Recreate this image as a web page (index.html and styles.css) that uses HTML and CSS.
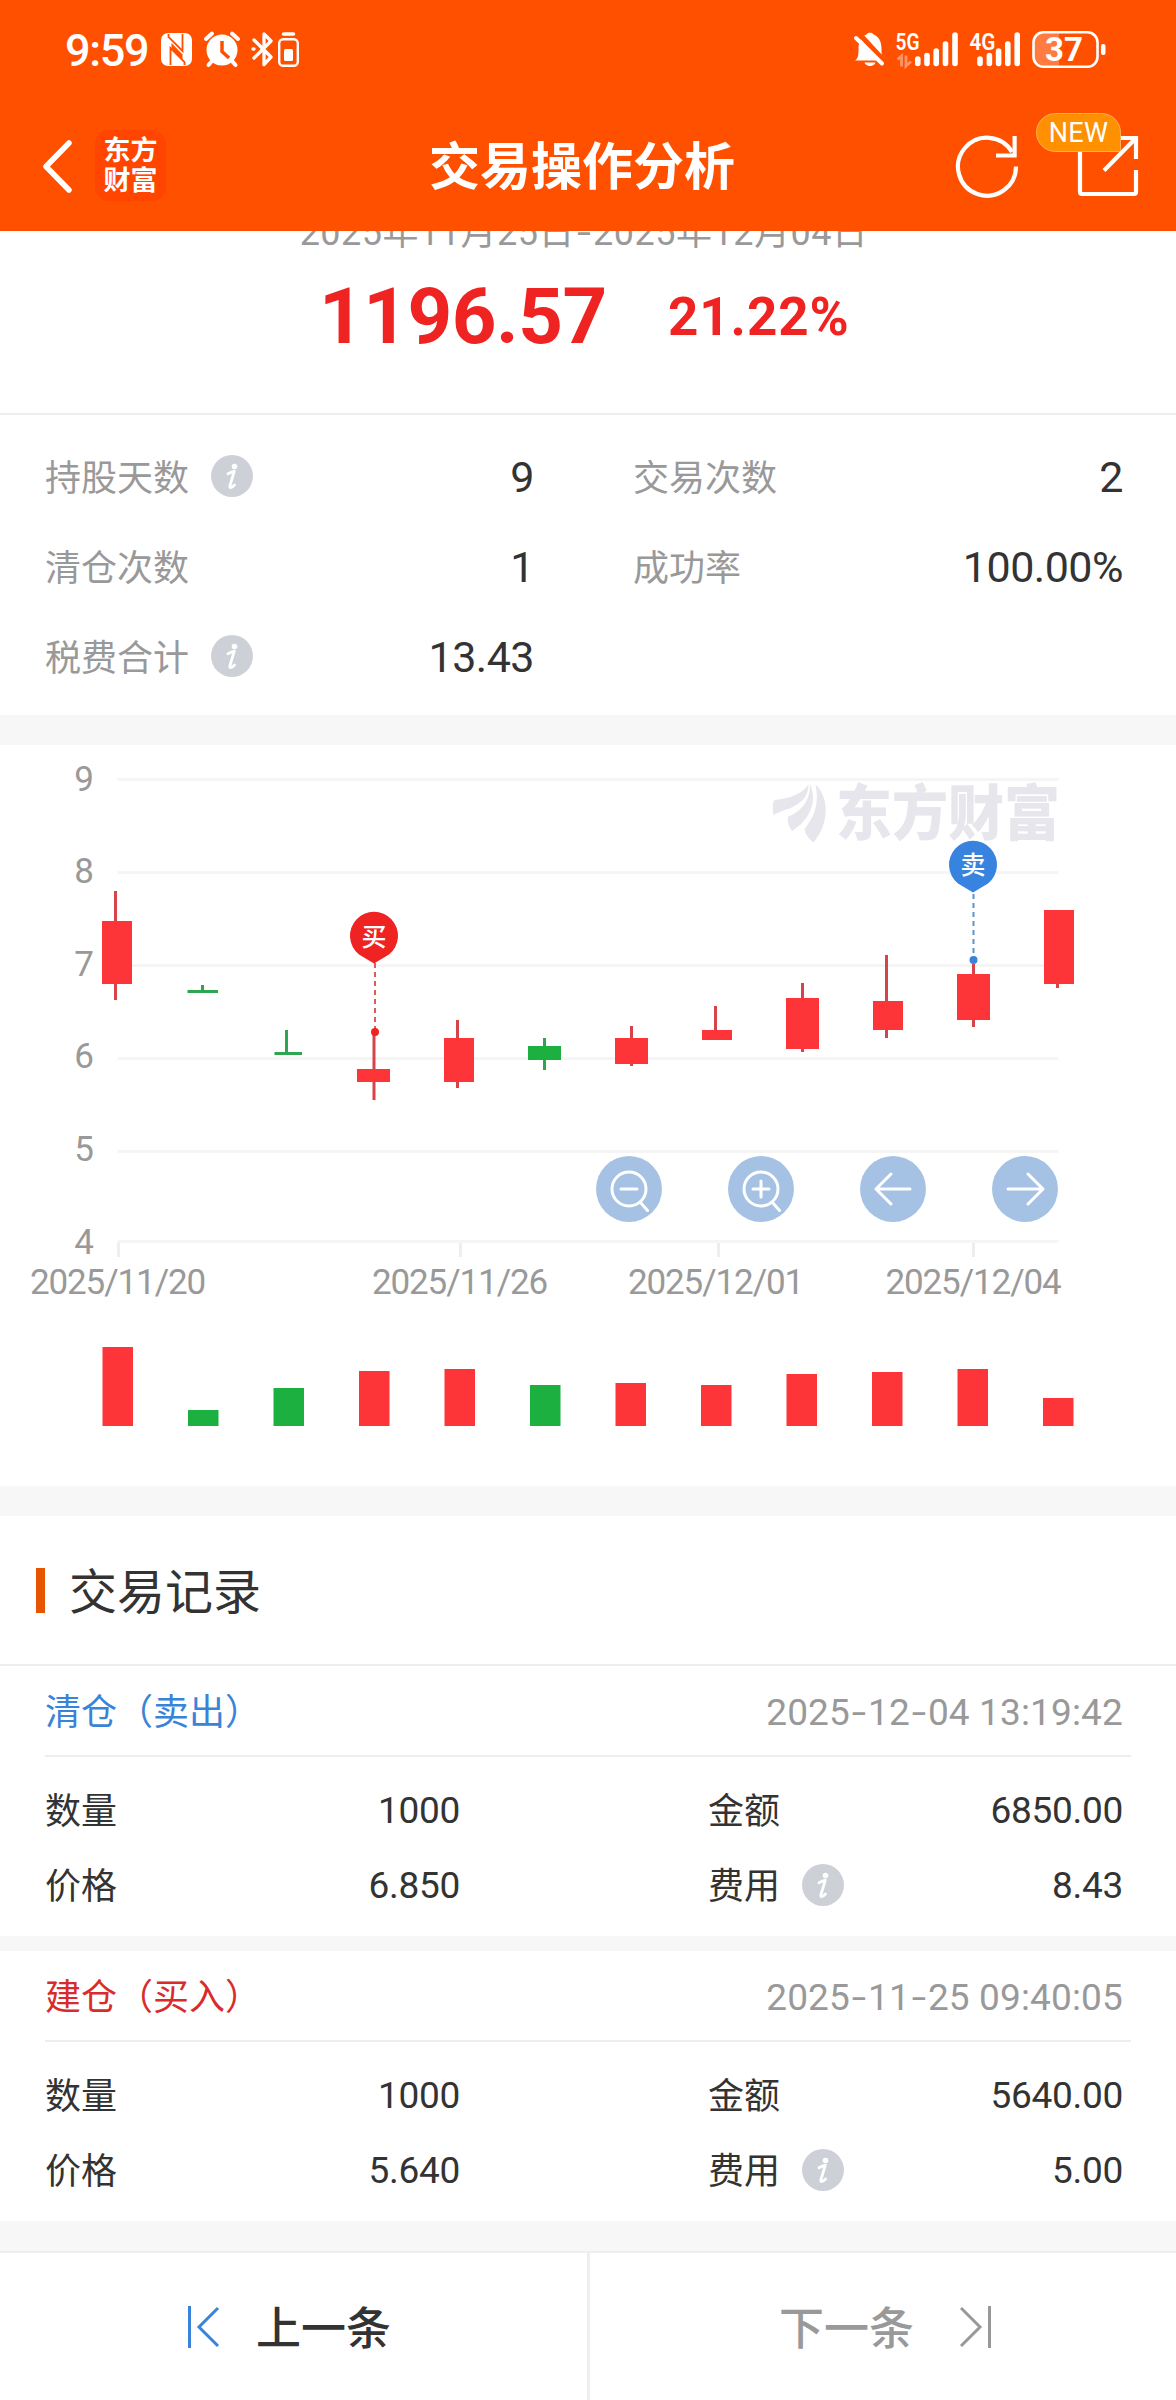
FILE: index.html
```html
<!DOCTYPE html>
<html lang="zh-CN">
<head>
  <meta charset="UTF-8">
  <meta name="viewport" content="width=device-width, initial-scale=1.0">
  <title>交易操作分析</title>
  <link rel="stylesheet" href="styles.css">
</head>
<body>
  <!-- 公用图标 -->
  <svg class="defs">
    <symbol id="info" viewBox="0 0 42 42">
      <circle cx="21" cy="21" r="21" fill="#cdd0d6"/>
      <circle cx="23.5" cy="11.5" r="2.8" fill="#fff"/>
      <path d="M17 18.800c2-1 4-2 6.300-2.600L19 30.500c-.8 2.800 1 3.200 4.500-.5" fill="none" stroke="#fff" stroke-width="2.800" stroke-linecap="round" stroke-linejoin="round"/>
    </symbol>
  </svg>

  <!-- 头部 -->
  <header class="header">
    <div class="status">
      <span class="time">9:59</span>
      <svg class="status-left" width="140" height="40" viewBox="160 30 140 40">
        <!-- NFC -->
        <rect x="161" y="33" width="31" height="33" rx="7" fill="#fff"/>
        <path d="M168.500 34v3l14 14V34M184.500 65v-3l-14-14v17" fill="none" stroke="#ff5000" stroke-width="1.800"/>
        <path d="M171.500 43l11 11.500v6L171.500 49z" fill="#ff5000"/>
        <!-- 闹钟 -->
        <circle cx="222" cy="50" r="15.500" fill="#fff"/>
        <path d="M206 39l6-5.500M238 39l-6-5.500M212 61l-3.500 4M232 61l3.500 4" stroke="#fff" stroke-width="4" stroke-linecap="round"/>
        <path d="M222 41v10.500l7 6.500" fill="none" stroke="#ff5000" stroke-width="3.500"/>
        <!-- 蓝牙 -->
        <path d="M254 40l17 17-7 7.500V34l7 7-17 17M253 49h1" fill="none" stroke="#fff" stroke-width="3.300" stroke-linecap="round" stroke-linejoin="round"/>
        <path d="M283.500 34h10" stroke="#fff" stroke-width="3.500" stroke-linecap="round"/>
        <rect x="279.200" y="39.200" width="18.600" height="26.600" rx="4" fill="none" stroke="#fff" stroke-width="2.400"/>
        <rect x="284" y="49" width="9" height="12" rx="1.500" fill="#fff"/>
      </svg>
      <svg class="status-right" width="256" height="40" viewBox="852 30 256 40">
        <!-- 静音 -->
        <path d="M855 60.500c3-2 3.500-5 3.500-11 0-9 3-13 8-15 1-2.500 6-2.500 7 0 5 2 8 6 8 15 0 6 .5 9 3.500 11z" fill="#fff"/>
        <path d="M864.500 62.500h11c-1 4.500-10 4.500-11 0z" fill="#fff"/>
        <path d="M858 32.500L887 64" stroke="#ff5000" stroke-width="5"/>
        <path d="M856 38l26 25.500" stroke="#fff" stroke-width="4" stroke-linecap="round"/>
        <text class="net" x="895.500" y="50" textLength="24" lengthAdjust="spacingAndGlyphs">5G</text>
        <path d="M897.500 59.500l4-3.500v10.500M906 55.500V66l5-4.500" fill="none" stroke="#ff9468" stroke-width="2.800"/>
        <path d="M917.800 59v4.500M927 55.500v8M936.200 51v12.500M945.500 44v19.500M955 35v28.500" stroke="#fff" stroke-width="5.600" stroke-linecap="round"/>
        <text class="net" x="969.500" y="50" textLength="26" lengthAdjust="spacingAndGlyphs">4G</text>
        <path d="M980 59v4.500M989.400 55.500v8M998.600 51v12.500M1007.800 44v19.500M1017.200 35v28.500" stroke="#fff" stroke-width="5.600" stroke-linecap="round"/>
        <!-- 电量 -->
        <path d="M1059 33h-14a11 11 0 0 0-11 11v11a11 11 0 0 0 11 11h14z" fill="#ff7b40"/>
        <rect x="1033.500" y="32.300" width="64" height="34.500" rx="10" fill="none" stroke="#fff" stroke-width="2.600"/>
        <rect x="1101" y="44" width="4.500" height="11" rx="2" fill="#fff"/>
        <text class="power" x="1064" y="61" text-anchor="middle">37</text>
      </svg>
    </div>
    <div class="nav">
      <div class="nav-left">
        <svg width="32" height="54" viewBox="0 0 32 54">
          <path d="M28 4L5 27.500 28 51" fill="none" stroke="#fff" stroke-width="5.500" stroke-linecap="round" stroke-linejoin="round"/>
        </svg>
        <div class="logo"><span>东方</span><span>财富</span></div>
      </div>
      <h1 class="title">交易操作分析</h1>
      <div class="nav-right">
        <svg width="64" height="66" viewBox="955 132 64 66">
          <path d="M1016 165.500A29 29 0 1 1 1012 151" fill="none" stroke="#fff" stroke-width="4.200"/>
          <path d="M1014.600 135v19.500H996" fill="none" stroke="#fff" stroke-width="4.200"/>
        </svg>
        <div class="share">
          <svg width="62" height="64" viewBox="1077 133 62 64">
            <path d="M1080 148v43q0 2 2 2h52q2 0 2-2v-22M1116 137h20v21M1104 169.500l31-31.500" fill="none" stroke="#fff" stroke-width="4.200"/>
          </svg>
          <span class="badge">NEW</span>
        </div>
      </div>
    </div>
  </header>

  <!-- 收益概览 -->
  <section class="summary">
    <p class="period">2025年11月25日<i>-</i>2025年12月04日</p>
    <div class="profit">
      <span class="amount">1196.57</span>
      <span class="rate">21.22%</span>
    </div>
  </section>
  <section class="stats">
    <div class="stat"><label>持股天数</label><svg class="info"><use href="#info"/></svg><b>9</b></div>
    <div class="stat"><label>交易次数</label><b>2</b></div>
    <div class="stat"><label>清仓次数</label><b>1</b></div>
    <div class="stat"><label>成功率</label><b>100.00%</b></div>
    <div class="stat"><label>税费合计</label><svg class="info"><use href="#info"/></svg><b>13.43</b></div>
  </section>

  <!-- K线图 -->
  <section class="chart">
    <svg width="1176" height="741" viewBox="0 745 1176 741">
      <path class="grid" d="M117.500 779.500h941M117.500 872.500h941M117.500 965.500h941M117.500 1058.500h941M117.500 1151.500h941M117.500 1241.500h941"/>
      <path class="tick" d="M118.500 1243v14M460.500 1243v14M718.500 1243v14M973.500 1243v14"/>
      <!-- 水印 -->
      <g fill="#e6e6ec">
        <path d="M773.500 815c-1-7-1-13 1-15 11-1 28-5 34-16 0 15-10 20-18 24-6 2-12 4-17 7z"/>
        <path d="M792 831c-3-4-5-9-4-14 10-5 22-12 22-33 8 18-1 37-18 47z"/>
        <path d="M813.500 842.500c-5-4-8-8-9-13 6-9 16-21 11-45 14 13 14 39-2 58z"/>
        <text class="watermark" x="836" y="835" textLength="224" lengthAdjust="spacingAndGlyphs">东方财富</text>
      </g>
      <!-- 坐标轴 -->
      <g class="axis" text-anchor="end">
        <text x="94" y="791">9</text>
        <text x="94" y="883">8</text>
        <text x="94" y="976">7</text>
        <text x="94" y="1068">6</text>
        <text x="94" y="1161">5</text>
        <text x="94" y="1254">4</text>
      </g>
      <g class="axis date" text-anchor="middle">
        <text x="117.500" y="1294">2025/11/20</text>
        <text x="459.500" y="1294">2025/11/26</text>
        <text x="715.500" y="1294">2025/12/01</text>
        <text x="973" y="1294">2025/12/04</text>
      </g>
      <!-- 影线 -->
      <path class="wick up" d="M115.500 891v109M374 1033v67M457.500 1020v68M631.500 1026v40M715.500 1006v25M802.500 983v69M886.500 955v83M973.500 964v63M1057.500 980v8"/>
      <path class="wick down" d="M202.500 985v6M187.500 991.500h30.500M286.500 1030v23M274.500 1053.500h27.500M544.500 1038v32"/>
      <!-- 实体 -->
      <g class="bar-up">
        <rect x="102" y="921" width="30" height="63"/>
        <rect x="357" y="1069" width="33" height="13"/>
        <rect x="444" y="1038" width="30" height="44"/>
        <rect x="615" y="1038" width="33" height="26"/>
        <rect x="702" y="1030" width="30" height="10"/>
        <rect x="786" y="998" width="33" height="51"/>
        <rect x="873" y="1001" width="30" height="29"/>
        <rect x="957" y="974" width="33" height="46"/>
        <rect x="1044" y="910" width="30" height="74"/>
      </g>
      <rect class="bar-down" x="528" y="1046" width="33" height="14"/>
      <!-- 成交量 -->
      <g class="bar-up">
        <rect x="102.500" y="1347" width="30.500" height="79"/>
        <rect x="359" y="1371" width="30.500" height="55"/>
        <rect x="444.500" y="1369" width="30.500" height="57"/>
        <rect x="615.500" y="1383" width="30.500" height="43"/>
        <rect x="701" y="1385" width="30.500" height="41"/>
        <rect x="786.500" y="1374" width="30.500" height="52"/>
        <rect x="872" y="1372" width="30.500" height="54"/>
        <rect x="957.500" y="1369" width="30.500" height="57"/>
        <rect x="1043" y="1398" width="30.500" height="28"/>
      </g>
      <g class="bar-down">
        <rect x="188" y="1410" width="30.500" height="16"/>
        <rect x="273.500" y="1388" width="30.500" height="38"/>
        <rect x="530" y="1385" width="30.500" height="41"/>
      </g>
      <!-- 买卖点 -->
      <g fill="#f02323">
        <path d="M375 963v68" stroke="#e05a5a" stroke-width="2" stroke-dasharray="5 4"/>
        <path d="M374 963.500l-15-9a24 24 0 1 1 30 0z"/>
        <circle cx="375" cy="1032" r="4"/>
        <text class="pin" x="374" y="945.500">买</text>
      </g>
      <g fill="#3983e0">
        <path d="M973.500 894v64" stroke="#5f93cc" stroke-width="2" stroke-dasharray="5 4"/>
        <path d="M973 892.500l-15-9a24 24 0 1 1 30 0z"/>
        <circle cx="973.500" cy="960" r="4"/>
        <text class="pin" x="973" y="874">卖</text>
      </g>
      <!-- 缩放、平移按钮 -->
      <g fill="#a5c2e4">
        <circle cx="629" cy="1189" r="33"/>
        <circle cx="761" cy="1189" r="33"/>
        <circle cx="893" cy="1189" r="33"/>
        <circle cx="1025" cy="1189" r="33"/>
      </g>
      <g class="btn-icon">
        <circle cx="629" cy="1189" r="17"/>
        <path d="M621 1189h16M640.500 1202.500l7 8"/>
        <circle cx="761" cy="1189" r="17"/>
        <path d="M753 1189h16M761 1181v16M772.500 1202.500l7 8"/>
        <path d="M910 1189h-34M891 1174l-15 15 15 15"/>
        <path d="M1008 1189h34M1028 1174l15 15-15 15"/>
      </g>
    </svg>
  </section>

  <!-- 交易记录 -->
  <section class="records">
    <h2 class="records-title"><span>交易记录</span></h2>
    <div class="record">
      <div class="record-head"><span class="sell">清仓（卖出）</span><time>2025<i>-</i>12<i>-</i>04 13:19:42</time></div>
      <div class="record-body">
        <div class="cell"><label>数量</label><b>1000</b></div>
        <div class="cell"><label>金额</label><b>6850.00</b></div>
        <div class="cell"><label>价格</label><b>6.850</b></div>
        <div class="cell"><label>费用</label><svg class="info"><use href="#info"/></svg><b>8.43</b></div>
      </div>
    </div>
    <div class="record">
      <div class="record-head"><span class="buy">建仓（买入）</span><time>2025<i>-</i>11<i>-</i>25 09:40:05</time></div>
      <div class="record-body">
        <div class="cell"><label>数量</label><b>1000</b></div>
        <div class="cell"><label>金额</label><b>5640.00</b></div>
        <div class="cell"><label>价格</label><b>5.640</b></div>
        <div class="cell"><label>费用</label><svg class="info"><use href="#info"/></svg><b>5.00</b></div>
      </div>
    </div>
  </section>

  <!-- 底部翻页 -->
  <footer class="pager">
    <div class="page prev">
      <svg width="34" height="44" viewBox="0 0 34 44"><path d="M2.500 1v42M31 3L12 22l19 19"/></svg>
      <span>上一条</span>
    </div>
    <div class="page next">
      <span>下一条</span>
      <svg width="34" height="44" viewBox="0 0 34 44"><path d="M31.500 1v42M3 3l19 19L3 41"/></svg>
    </div>
  </footer>
</body>
</html>
```
FILE: styles.css
```css
* {
  margin: 0;
  padding: 0;
  box-sizing: border-box;
}

body {
  width: 1176px;
  height: 2400px;
  overflow: hidden;
  background-color: #f7f7f7;
  color: #333;
  font-family: Roboto, "Noto Sans CJK SC", sans-serif;
  font-size: 36px;
}

svg {
  display: block;
  flex: none;
  overflow: visible;
}

b, i {
  font-weight: normal;
  font-style: normal;
}

.defs {
  width: 0;
  height: 0;
  display: none;
}

.info {
  width: 42px;
  height: 42px;
  margin-left: 22px;
}

/*头部*/
.header {
  height: 231px;
  background-color: #ff5000;
  color: #fff;
}

.status {
  display: flex;
  align-items: center;
  height: 100px;
  padding: 0 68px 0 65px;
}

.time {
  width: 95px;
  font-size: 45px;
  font-weight: 500;
  letter-spacing: -1.3px;
}

.status-right {
  margin-left: auto;
}

.net {
  font-size: 24px;
  font-weight: 600;
  fill: #fff;
}

.power {
  font-size: 33px;
  font-weight: 700;
  fill: #fff;
}

.nav {
  display: flex;
  align-items: center;
  justify-content: space-between;
  height: 131px;
  padding: 0 37px 0 41px;
}

.nav-left {
  display: flex;
  align-items: center;
  width: 240px;
  gap: 22px;
}

.logo {
  display: flex;
  flex-direction: column;
  align-items: center;
  justify-content: center;
  width: 71px;
  height: 71px;
  border-radius: 14px;
  background-color: #ff4500;
  font-size: 27px;
  font-weight: 700;
  line-height: 30px;
}

.title {
  padding-top: 5px;
  font-size: 51px;
  font-weight: 700;
  line-height: 70px;
}

.nav-right {
  display: flex;
  align-items: center;
  justify-content: flex-end;
  width: 256px;
  gap: 58px;
}

.share {
  position: relative;
}

.badge {
  position: absolute;
  left: -41px;
  top: -21px;
  width: 85px;
  height: 39px;
  border: 1px solid #ffb057;
  border-radius: 20px 20px 2px 20px;
  background-color: #ff9100;
  font-size: 27px;
  line-height: 38px;
  text-align: center;
  letter-spacing: 0.3px;
}

/*收益概览*/
.summary {
  height: 184px;
  overflow: hidden;
  border-bottom: 2px solid #eee;
  background-color: #fff;
  text-align: center;
}

.period {
  height: 40px;
  margin-top: -18px;
  margin-right: 8px;
  color: #999;
  line-height: 40px;
  letter-spacing: 0.5px;
}

.period i, time i {
  display: inline-block;
  width: 18px;
  text-align: center;
  letter-spacing: 0;
  transform: scaleX(1.4);
}

.profit {
  display: flex;
  align-items: center;
  height: 126px;
  padding-left: 319px;
  color: #f02323;
  font-weight: 700;
}

.amount {
  width: 349px;
  font-size: 78px;
  text-align: left;
  letter-spacing: -0.5px;
}

.rate {
  padding-top: 1px;
  font-size: 53px;
  letter-spacing: 0.9px;
}

/*统计*/
.stats {
  display: grid;
  grid-template-columns: 489px 1fr;
  grid-auto-rows: 90px;
  align-content: start;
  column-gap: 99px;
  height: 300px;
  padding: 16px 53px 0 45px;
  background-color: #fff;
}

.stat {
  display: flex;
  align-items: center;
}

.stat label {
  padding-bottom: 3px;
  color: #999;
}

.stat b {
  margin-left: auto;
  padding-top: 1px;
  font-size: 43px;
  letter-spacing: -0.5px;
}

/*图表*/
.chart {
  margin-top: 30px;
  background-color: #fff;
}

.grid {
  stroke: #f5f5f5;
  stroke-width: 3;
}

.tick {
  stroke: #eee;
  stroke-width: 3;
}

.axis {
  fill: #999;
  font-size: 35px;
}

.date {
  letter-spacing: -1.1px;
}

.watermark {
  font-size: 60px;
  font-weight: 900;
}

.wick {
  stroke-width: 3;
}

.up {
  stroke: #d44448;
}

.down {
  stroke: #2fa54f;
}

.bar-up {
  fill: #fd3539;
}

.bar-down {
  fill: #1bb040;
}

.pin {
  fill: #fff;
  font-size: 25px;
  font-weight: 500;
  text-anchor: middle;
}

.btn-icon {
  fill: none;
  stroke: #fff;
  stroke-width: 3;
  stroke-linecap: round;
  stroke-linejoin: round;
}

/*交易记录*/
.records {
  margin-top: 30px;
}

.records-title {
  display: flex;
  align-items: center;
  height: 150px;
  padding-left: 36px;
  border-bottom: 2px solid #eee;
  background-color: #fff;
  font-size: 48px;
  font-weight: 400;
}

.records-title::before {
  content: "";
  width: 9px;
  height: 45px;
  margin-right: 24px;
  background-color: #e85500;
}

.records-title span {
  padding-bottom: 4px;
}

.record {
  height: 270px;
  margin-bottom: 15px;
  padding-left: 45px;
  background-color: #fff;
}

.record:last-child {
  margin-bottom: 0;
}

.record-head {
  display: flex;
  align-items: center;
  justify-content: space-between;
  width: 1086px;
  height: 91px;
  padding-right: 8px;
  border-bottom: 2px solid #eee;
}

.record-head span {
  padding-bottom: 3px;
}

.record-head time {
  padding-top: 3px;
  color: #999;
  font-size: 37px;
  letter-spacing: 0.15px;
}

.sell {
  color: #3983d8;
}

.buy {
  color: #d92b2b;
}

.record-body {
  display: grid;
  grid-template-columns: 415px 415px;
  column-gap: 248px;
  padding-top: 15px;
}

.cell {
  display: flex;
  align-items: center;
  height: 75px;
}

.cell label {
  padding-bottom: 4px;
}

.cell b {
  margin-left: auto;
  padding-top: 1px;
  font-size: 37px;
  letter-spacing: -0.3px;
}

/*底部*/
.pager {
  display: flex;
  height: 149px;
  margin-top: 30px;
  border-top: 2px solid #eee;
  background-color: #fff;
}

.page {
  display: flex;
  align-items: center;
  font-size: 45px;
  font-weight: 500;
}

.page span {
  padding-bottom: 2px;
}

.page svg {
  fill: none;
  stroke: currentColor;
  stroke-width: 3;
}

.prev {
  width: 590px;
  padding-left: 187px;
  gap: 35px;
  border-right: 3px solid #eee;
}

.prev svg {
  stroke: #3983d8;
}

.next {
  padding-left: 189px;
  gap: 44px;
  color: #999;
}
```
